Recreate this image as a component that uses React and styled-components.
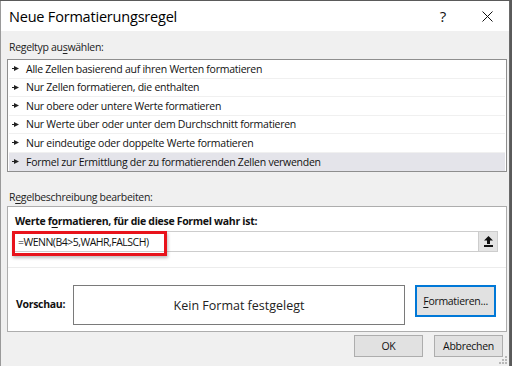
import React from "react";
import styled, { createGlobalStyle } from "styled-components";

const Global = createGlobalStyle`
  html, body { margin: 0; padding: 0; background: #5a5a5a; }
  body { font-family: "Open Sans", "Noto Sans", sans-serif; }
  * { box-sizing: border-box; }
`;

const Window = styled.div`
  position: relative;
  width: 510px;
  height: 365px;
  margin-top: 1px;
  background: #f0f0f0;
  border-left: 1px solid #9a9a9a;
  border-right: 1px solid #6a6a6a;
  display: flex;
  flex-direction: column;
`;

const TitleBar = styled.div`
  height: 30px;
  background: #fff;
  display: flex;
  align-items: center;
  padding-left: 8px;
  font-size: 14.5px;
  color: #000;
`;

const Title = styled.div`
  flex: 1;
  letter-spacing: -0.2px;
`;

const TitleBtn = styled.div`
  width: 44px;
  height: 30px;
  display: flex;
  align-items: center;
  justify-content: center;
  font-size: 15px;
  color: #111;
`;

const Body = styled.div`
  flex: 1;
  display: flex;
  flex-direction: column;
  padding: 0 4px 0 6px;
  font-size: 10.5px;
  letter-spacing: -0.3px;
`;

const SectionLabel = styled.div`
  color: #222;
  height: 15px;
  line-height: 15px;
  margin-top: ${(p) => p.$top}px;
  padding-left: 2px;
`;

const ListBox = styled.div`
  margin-top: 4px;
  width: 500px;
  border: 1px solid #8e8e8e;
  background: #fff;
  padding: 0 1px;
`;

const Row = styled.div`
  height: 18.5px;
  display: flex;
  align-items: center;
  padding-left: 3px;
  gap: 7px;
  color: #111;
  letter-spacing: -0.25px;
  background: ${(p) => (p.$selected ? "#e4e4ea" : "#fff")};
  border-bottom: ${(p) => (p.$last ? "none" : "1px solid #f0f0f0")};
`;

const Panel = styled.div`
  position: relative;
  margin-top: 1px;
  width: 500px;
  height: 126px;
  background: #fff;
  border: 1px solid #adadad;
  display: flex;
  flex-direction: column;
  padding: 0 10px 0 5px;
`;

const BoldLabel = styled.div`
  font-weight: 700;
  color: #111;
  margin-top: 6px;
  height: 16px;
  line-height: 16px;
  padding-left: 2px;
`;

const InputRow = styled.div`
  margin-top: 2px;
  height: 21px;
  display: flex;
  border: 1px solid #cdcdcd;
  width: 485px;
`;

const Input = styled.div`
  flex: 1;
  display: flex;
  align-items: center;
  padding-left: 4px;
  color: #111;
  letter-spacing: -0.5px;
`;

const RefButton = styled.div`
  width: 19px;
  background: #e4e4e4;
  border-left: 1px solid #cdcdcd;
  display: flex;
  align-items: center;
  justify-content: center;
`;

const Highlight = styled.div`
  position: absolute;
  left: 4px;
  top: 24px;
  width: 155px;
  height: 25px;
  border: 3px solid #e8131b;
  box-shadow: 1px 2px 3px rgba(0, 0, 0, 0.25);
  pointer-events: none;
`;

const Divider = styled.div`
  margin-top: 15px;
  margin-left: -5px;
  margin-right: -10px;
  height: 1px;
  background: #ececec;
`;

const PreviewRow = styled.div`
  margin-top: 17px;
  display: flex;
  align-items: flex-start;
`;

const PreviewLabel = styled.div`
  width: 60px;
  font-weight: 700;
  color: #111;
  padding-left: 3px;
  margin-top: 12px;
`;

const PreviewBox = styled.div`
  width: 333px;
  height: 40px;
  border: 1px solid #7a7a7a;
  display: flex;
  align-items: center;
  justify-content: center;
  font-size: 12.5px;
  letter-spacing: 0;
  color: #222;
`;

const Button = styled.div`
  width: ${(p) => p.$w}px;
  height: ${(p) => p.$h}px;
  margin-left: ${(p) => p.$ml || 0}px;
  background: #e1e1e1;
  border: ${(p) => (p.$focus ? "2px solid #0078d7" : "1px solid #adadad")};
  display: flex;
  align-items: center;
  justify-content: center;
  color: #111;
`;

const Underline = styled.span`
  text-decoration: underline;
  text-underline-offset: 2px;
`;

const ButtonRow = styled.div`
  margin-top: 3px;
  display: flex;
  padding-left: 347px;
`;

const Grip = styled.svg`
  position: absolute;
  right: 2px;
  bottom: 2px;
`;

const Arrow = () => (
  <svg width="7" height="5" viewBox="0 0 7 5">
    <rect x="0" y="2" width="3" height="1" fill="#222" />
    <polygon points="2,0 7,2.5 2,5" fill="#222" />
  </svg>
);

const UploadIcon = () => (
  <svg width="9" height="11" viewBox="0 0 9 11">
    <polygon points="4.5,0 9,4.5 6,4.5 6,8 3,8 3,4.5 0,4.5" fill="#111" />
    <rect x="0" y="9" width="9" height="2" fill="#111" />
  </svg>
);

const rules = [
  "Alle Zellen basierend auf ihren Werten formatieren",
  "Nur Zellen formatieren, die enthalten",
  "Nur obere oder untere Werte formatieren",
  "Nur Werte über oder unter dem Durchschnitt formatieren",
  "Nur eindeutige oder doppelte Werte formatieren",
  "Formel zur Ermittlung der zu formatierenden Zellen verwenden",
];

export default function App() {
  return (
    <>
      <Global />
      <Window>
        <TitleBar>
          <Title>Neue Formatierungsregel</Title>
          <TitleBtn>?</TitleBtn>
          <TitleBtn>
            <svg width="11" height="11" viewBox="0 0 11 11">
              <path d="M0.5 0.5 L10.5 10.5 M10.5 0.5 L0.5 10.5" stroke="#111" strokeWidth="1" />
            </svg>
          </TitleBtn>
        </TitleBar>
        <Body>
          <SectionLabel $top={9}>
            Regeltyp au<Underline>s</Underline>wählen:
          </SectionLabel>
          <ListBox>
            {rules.map((r, i) => (
              <Row key={r} $selected={i === 5} $last={i === 5}>
                <Arrow />
                {r}
              </Row>
            ))}
          </ListBox>
          <SectionLabel $top={18}>
            R<Underline>e</Underline>gelbeschreibung bearbeiten:
          </SectionLabel>
          <Panel>
            <BoldLabel>
              Werte f<Underline>o</Underline>rmatieren, für die diese Formel wahr ist:
            </BoldLabel>
            <InputRow>
              <Input>=WENN(B4&gt;5,WAHR,FALSCH)</Input>
              <RefButton>
                <UploadIcon />
              </RefButton>
            </InputRow>
            <Highlight />
            <Divider />
            <PreviewRow>
              <PreviewLabel>Vorschau:</PreviewLabel>
              <PreviewBox>Kein Format festgelegt</PreviewBox>
              <Button $w={81} $h={32} $ml={10} $focus>
                <Underline>F</Underline>ormatieren...
              </Button>
            </PreviewRow>
          </Panel>
          <ButtonRow>
            <Button $w={69} $h={22}>OK</Button>
            <Button $w={69} $h={22} $ml={11}>Abbrechen</Button>
          </ButtonRow>
        </Body>
        <Grip width="10" height="10" viewBox="0 0 10 10">
          {[[8, 2], [8, 5], [5, 5], [8, 8], [5, 8], [2, 8]].map(([x, y]) => (
            <rect key={`${x}-${y}`} x={x} y={y} width="2" height="2" fill="#b8b8b8" />
          ))}
        </Grip>
      </Window>
    </>
  );
}
